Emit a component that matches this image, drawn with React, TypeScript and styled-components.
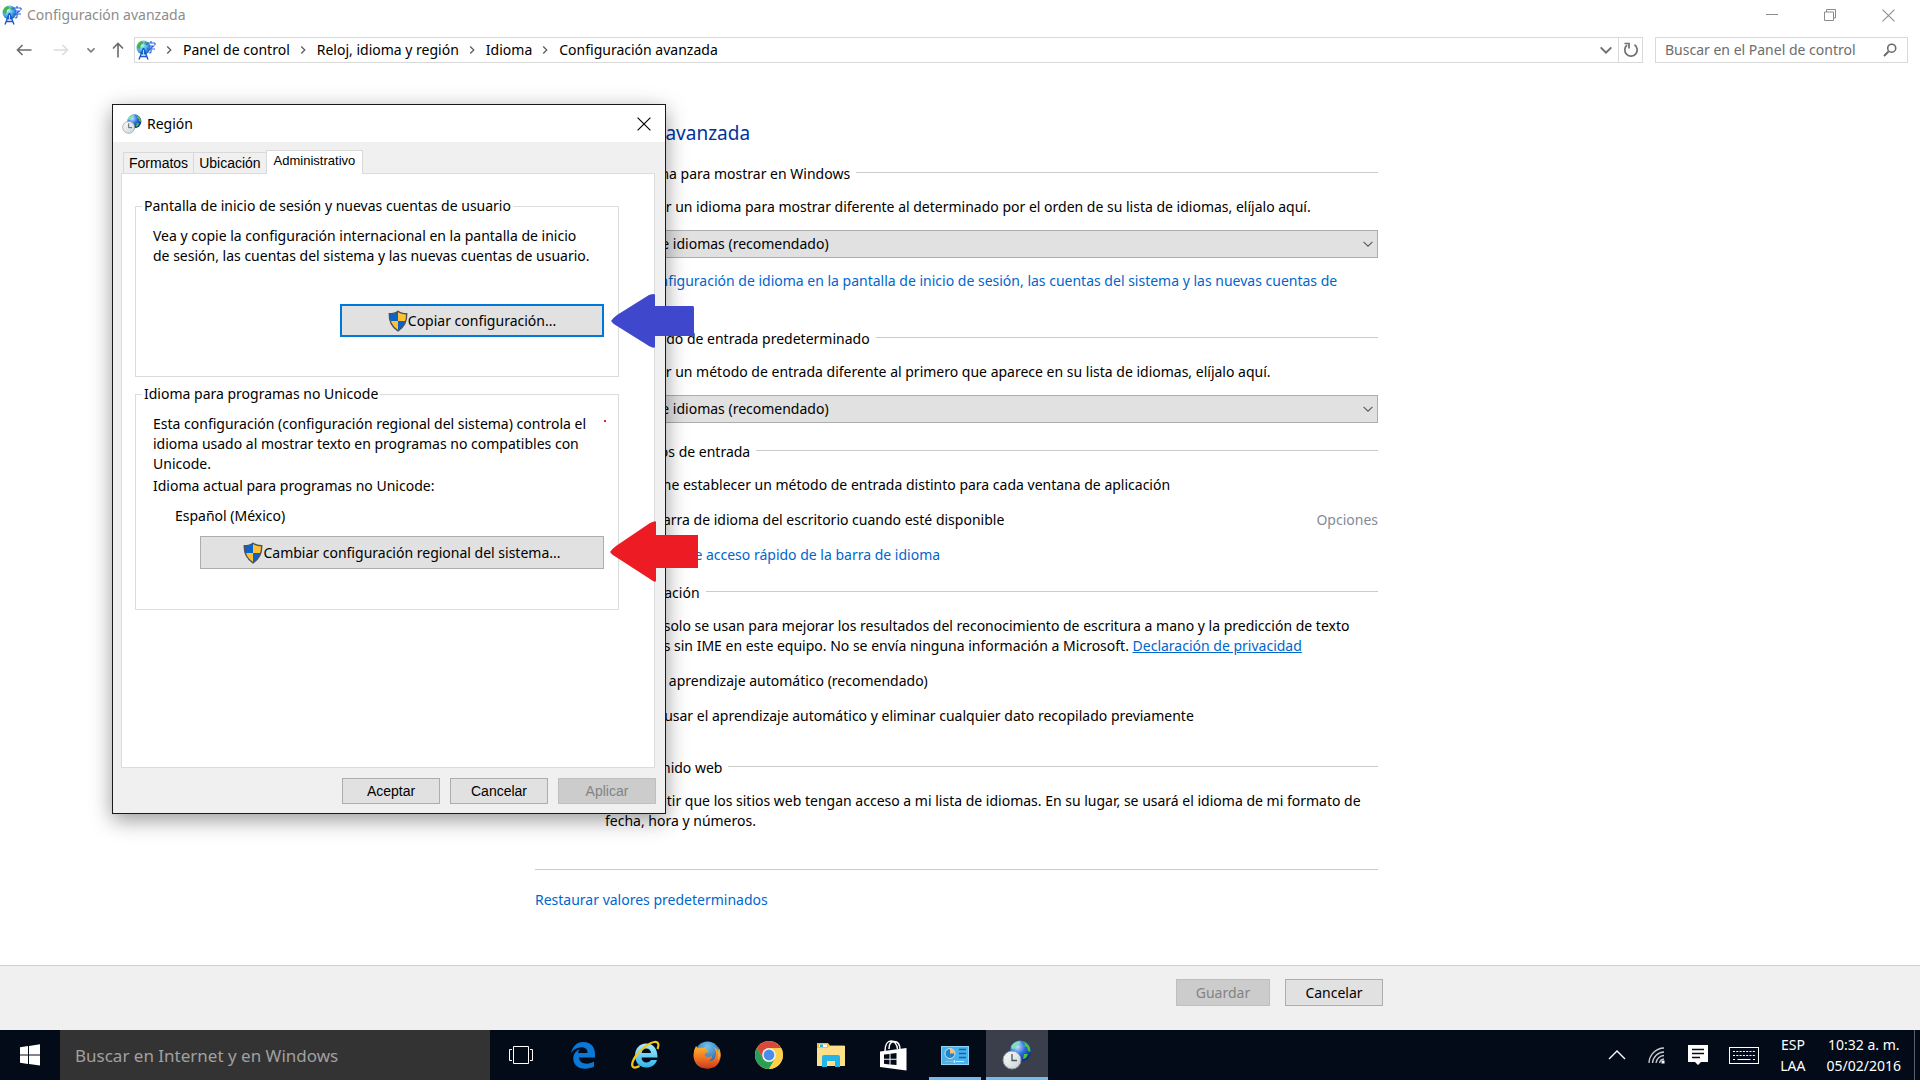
import React from "react";
import styled, { createGlobalStyle } from "styled-components";

const ui = '"Noto Sans", "Open Sans", sans-serif';
const classic = '"Liberation Sans", Arial, sans-serif';

const GlobalStyle = createGlobalStyle`
  *, *::before, *::after { box-sizing: border-box; }
  body { margin: 0; background: #fff; color: #000; font: 14px/20px ${ui}; }
  button, input, select { font: inherit; color: inherit; margin: 0; }
  h1, h2, p { margin: 0; font-weight: 400; }
  svg { display: block; flex: none; }
`;

/* ---------- shell ---------- */

const Desktop = styled.div`
  position: relative;
  display: flex;
  flex-direction: column;
  min-height: 100vh;
`;

const TitleBar = styled.header`
  display: flex;
  align-items: center;
  height: 30px;
  padding: 0 23px 0 2px;
  gap: 5px;
  color: #8c8c8c;
`;

const PlainButton = styled.button`
  display: grid;
  place-items: center;
  padding: 0;
  border: 0;
  background: none;
`;

const WindowControls = styled.div`
  display: flex;
  gap: 40px;
  margin-left: auto;

  ${PlainButton} { width: 18px; }
`;

const NavRow = styled.nav`
  display: flex;
  align-items: center;
  height: 40px;
  padding: 0 12px 0 6px;
`;

const History = styled.div`
  display: grid;
  grid-template-columns: 36px 38px 22px 32px;
`;

const AddressBar = styled.div`
  display: flex;
  flex: 1;
  height: 26px;
  margin-right: 12px;
  border: 1px solid #d9d9d9;
`;

const Crumbs = styled.ol`
  display: flex;
  align-items: center;
  flex: 1;
  margin: 0;
  padding: 0 0 0 1px;
  list-style: none;

  li { display: flex; align-items: center; }
  a { color: #000; text-decoration: none; }
  li svg { margin: 0 10px 0 9px; }
`;

const AddressButton = styled(PlainButton)<{ $divided?: boolean }>`
  width: 24px;
  border-left: ${(p) => (p.$divided ? "1px solid #d9d9d9" : "0")};
`;

const SearchBox = styled.label`
  display: flex;
  align-items: center;
  width: 253px;
  height: 26px;
  padding: 0 10px 0 9px;
  border: 1px solid #d9d9d9;

  input {
    flex: 1;
    min-width: 0;
    padding: 0;
    border: 0;
    outline: 0;
    background: none;
  }
  input::placeholder { color: #6d6d6d; opacity: 1; }
`;

/* ---------- settings page ---------- */

const Page = styled.main`
  flex: 1;
  width: 100%;
  max-width: 1378px;
  padding: 49px 0 0 535px;
`;

const Heading = styled.h1`
  font-size: 19px;
  line-height: 28px;
  margin-bottom: 17px;
  color: #003399;
`;

const Section = styled.section<{ $top?: number }>`
  margin-top: ${(p) => p.$top ?? 0}px;
`;

const Legend = styled.h2`
  display: flex;
  font-size: 14px;
  line-height: 20px;
  gap: 6px;
  margin-bottom: 13px;

  &::after {
    content: "";
    flex: 1;
    height: 1px;
    margin-top: 8px;
    background: #cbcbcb;
  }
`;

const Stack = styled.div<{ $gap: number }>`
  display: grid;
  gap: ${(p) => p.$gap}px;
  padding-left: 50px;
`;

const Link = styled.a<{ $underlined?: boolean }>`
  color: #0066cc;
  text-decoration: ${(p) => (p.$underlined ? "underline" : "none")};
`;

const MutedLink = styled.button`
  padding: 0;
  border: 0;
  background: none;
  color: #838b99;
  margin-left: auto;
`;

const SelectWrap = styled.div`
  display: grid;
  align-items: center;

  > * { grid-area: 1 / 1; }
  svg { justify-self: end; margin-right: 5px; pointer-events: none; }
`;

const Select = styled.select`
  appearance: none;
  width: 100%;
  height: 28px;
  padding: 0 24px 0 2px;
  border: 1px solid #adadad;
  border-radius: 0;
  background: #e1e1e1;
`;

const Choice = styled.label`
  display: flex;
  align-items: flex-start;
  gap: 7px;

  input { flex: none; width: 13px; height: 13px; margin-top: 3px; }
`;

const Line = styled.div`
  display: flex;
`;

const Restore = styled.div`
  margin-top: 38px;
  padding-top: 20px;
  border-top: 1px solid #cbcbcb;
`;

const Footer = styled.footer`
  height: 65px;
  border-top: 1px solid #cfcfcf;
  background: #f0f0f0;
`;

const FooterButtons = styled.div`
  display: flex;
  justify-content: flex-end;
  gap: 15px;
  width: 100%;
  max-width: 1383px;
  padding-top: 13px;
`;

const PushButton = styled.button<{ $width: number; $height: number; $focused?: boolean; $classic?: boolean }>`
  display: flex;
  align-items: center;
  justify-content: center;
  width: ${(p) => p.$width}px;
  height: ${(p) => p.$height}px;
  padding: 0;
  border: ${(p) => (p.$focused ? "2px solid #0078d7" : "1px solid #adadad")};
  background: #e1e1e1;
  font-family: ${(p) => (p.$classic ? classic : ui)};

  &:disabled { border-color: #bfbfbf; background: #ccc; color: #838383; }
`;

/* ---------- dialog ---------- */

const Dialog = styled.div`
  position: absolute;
  left: 112px;
  top: 104px;
  width: 554px;
  border: 1px solid #1a1a1a;
  background: #f0f0f0;
  box-shadow: 0 6px 20px rgba(0, 0, 0, 0.4);
`;

const DialogTitle = styled.header`
  display: flex;
  align-items: center;
  gap: 5px;
  height: 37px;
  padding: 0 14px 0 9px;
  background: #fff;

  button { margin-left: auto; }
`;

const DialogBody = styled.div`
  padding: 8px 10px 9px 8px;
`;

const Tabs = styled.div`
  display: flex;
  align-items: flex-end;
  padding-left: 3px;
`;

const Tab = styled.button<{ $active?: boolean }>`
  height: ${(p) => (p.$active ? 24 : 21)}px;
  margin: 0 0 ${(p) => (p.$active ? -1 : 0)}px -1px;
  padding: ${(p) => (p.$active ? "0 7px 3px" : "0 5px")};
  border: 1px solid #d9d9d9;
  border-bottom: 0;
  background: ${(p) => (p.$active ? "#fff" : "#f0f0f0")};
  position: relative;
  font-family: ${classic};
  font-size: ${(p) => (p.$active ? 13 : 14)}px;
  line-height: 18px;
  white-space: nowrap;
`;

const TabPanel = styled.div`
  height: 595px;
  padding: 22px 35px 0 13px;
  border: 1px solid #dcdcdc;
  background: #fff;
`;

const Group = styled.fieldset<{ $height: number }>`
  height: ${(p) => p.$height}px;
  margin: 0 0 7px;
  padding: 10px 14px 0 17px;
  border: 1px solid #dcdcdc;
  display: flow-root;

  legend { margin-left: -11px; padding: 0 2px; }
  p + p { margin-top: 2px; }
`;

const GroupAction = styled.div<{ $top: number }>`
  display: flex;
  justify-content: flex-end;
  margin-top: ${(p) => p.$top}px;
`;

const CurrentLocale = styled.p`
  padding: 8px 0 0 22px;
`;

const DialogButtons = styled.div`
  display: flex;
  justify-content: flex-end;
  gap: 10px;
  padding-top: 10px;
  margin-right: -1px;
`;

const Marker = styled.svg<{ $left: number; $top: number }>`
  position: absolute;
  left: ${(p) => p.$left}px;
  top: ${(p) => p.$top}px;
`;

/* ---------- taskbar ---------- */

const Taskbar = styled.div`
  display: flex;
  height: 50px;
  background: #040b18;
  color: #fff;
`;

const TaskButton = styled.button<{ $open?: boolean; $active?: boolean }>`
  display: grid;
  place-items: center;
  width: 62px;
  padding: 0;
  border: 0;
  background: ${(p) => (p.$active ? "#3b3f4b" : "none")};
  box-shadow: ${(p) => (p.$active ? "inset 0 -3px #76b9ed" : "none")};
  position: relative;

  &::after {
    content: ${(p) => (p.$open ? '""' : "none")};
    position: absolute;
    left: 5px;
    right: 5px;
    bottom: 0;
    height: 3px;
    background: #76b9ed;
  }
`;

const StartButton = styled(TaskButton)`
  width: 60px;
`;

const TaskSearch = styled.input`
  width: 430px;
  padding: 2px 15px 0;
  border: 0;
  outline: 0;
  background: #333;

  &&::placeholder { color: #a0a0a0; opacity: 1; }
  && { font-size: 17px; }
`;

const Tray = styled.div`
  display: flex;
  align-items: center;
  gap: 21px;
  margin-left: auto;
  padding-right: 5px;
`;

const TrayText = styled.div`
  line-height: 21px;
  text-align: center;
  white-space: nowrap;
`;

const ShowDesktop = styled.div`
  align-self: stretch;
  width: 1px;
  margin-left: -8px;
  background: #5b606b;
`;

/* ---------- drawings ---------- */

const LanguageIcon = () => (
  <svg width="20" height="20" viewBox="0 0 20 20">
    <defs>
      <radialGradient id="lg" cx=".35" cy=".3" r=".8">
        <stop offset="0" stopColor="#d4f6ff" />
        <stop offset=".5" stopColor="#4fb3ea" />
        <stop offset="1" stopColor="#1557b4" />
      </radialGradient>
    </defs>
    <circle cx="7.500" cy="7.500" r="7" fill="url(#lg)" />
    <path d="M1 6q1-4 5-5l2 2-3 2-1 4-3-1zM9 1.500l3 1.500-2 2-2-1z" fill="#42b649" />
    <path d="M11 3h8M15 1v2M11 3v2M19 3v2M12.500 6h5l-2.500 2v4q0 1-2 1M11 9h8" fill="none" stroke="#2a62e0" strokeWidth="1.200" />
    <path d="M7.500 8L3 19.500M7.500 8L12 19.500M5.500 13.500h4M4.500 16.500h6" fill="none" stroke="#1c55d0" strokeWidth="1.400" />
    <path d="M7.500 10v6" stroke="#9bdcff" strokeWidth="1" />
  </svg>
);

const RegionIcon = ({ size }: { size: number }) => (
  <svg width={size} height={size} viewBox="0 0 30 30">
    <defs>
      <radialGradient id="rg" cx=".35" cy=".3" r=".8">
        <stop offset="0" stopColor="#c4e4ff" />
        <stop offset=".45" stopColor="#2f6fe0" />
        <stop offset="1" stopColor="#081d78" />
      </radialGradient>
      <linearGradient id="rc" x2="1" y2="1">
        <stop offset="0" stopColor="#ffffff" />
        <stop offset="1" stopColor="#c8d2d8" />
      </linearGradient>
    </defs>
    <circle cx="18.500" cy="11" r="10.500" fill="url(#rg)" />
    <path d="M21 1.500Q26 3 28 7.500L28.500 12L26 11L25 7L22 6L23 4zM22 14l4 0-2 4-3 1z" fill="#4cc53e" />
    <path d="M9 6q3-4 8-5l2 2-4 2-1 3-4 1z" fill="#7fe0b8" />
    <circle cx="10" cy="20" r="9" fill="url(#rc)" stroke="#8d989e" strokeWidth="1" />
    <circle cx="10" cy="20" r="7.200" fill="none" stroke="#b9c5cb" strokeWidth=".8" strokeDasharray="1 2.770" />
    <path d="M10 14v6.500h5" fill="none" stroke="#4a555b" strokeWidth="1.300" />
  </svg>
);

const Shield = () => (
  <svg width="20" height="22" viewBox="0 0 20 22">
    <clipPath id="sh">
      <path d="M10 1.500Q13 4 18.500 4Q19 15 10 20.500Q1 15 1.500 4Q7 4 10 1.500z" />
    </clipPath>
    <g clipPath="url(#sh)">
      <rect width="10" height="11" fill="#0a63c9" />
      <rect x="10" width="10" height="11" fill="#ffc233" />
      <rect y="11" width="10" height="11" fill="#ffc233" />
      <rect x="10" y="11" width="10" height="11" fill="#0a63c9" />
    </g>
    <path d="M10 1.200Q13 3.700 18.700 3.700Q19.200 15 10 20.800Q.8 15 1.300 3.700Q7 3.700 10 1.200z" fill="none" stroke="#4d5358" strokeWidth="1.400" />
  </svg>
);

const Chevron = ({ dir, size = 8, color = "#5a5a5a", weight = 1.4 }: { dir: "right" | "down" | "up"; size?: number; color?: string; weight?: number }) => {
  const d = { right: "M2 0L6 4L2 8", down: "M0 2L4 6L8 2", up: "M0 6L4 2L8 6" }[dir];
  return (
    <svg width={size} height={size} viewBox="-.5 -.5 9 9">
      <path d={d} fill="none" stroke={color} strokeWidth={weight} />
    </svg>
  );
};

const Arrow = ({ dir, color }: { dir: "left" | "right" | "up"; color: string }) => {
  const turn = { left: 0, right: 180, up: 90 }[dir];
  return (
    <svg width="16" height="16" viewBox="0 0 16 16">
      <path d="M15.500 8H1M6.500 3L1.500 8L6.500 13" fill="none" stroke={color} strokeWidth="1.600" transform={`rotate(${turn} 8 8)`} />
    </svg>
  );
};

const Cross = ({ size, color }: { size: number; color: string }) => (
  <svg width={size} height={size} viewBox="0 0 12 12">
    <path d="M.5.500l11 11M11.500.500l-11 11" stroke={color} strokeWidth="1" />
  </svg>
);

const EdgeIcon = () => (
  <svg width="26" height="28" viewBox="0 0 26 28">
    <path d="M1 12C3 4 8 1 13.500 1C21 1 25 6.500 25 13V16.500H9C9.300 21 13 22.700 16.500 22.700C19.500 22.700 21.800 21.800 24 20.500V25.600C21.500 27 18.500 27.700 15 27.700C7.500 27.700 3.300 23.500 3.300 17.500C3.300 13 6 9.500 10 8C8.700 9.300 8.300 10.600 8.200 12H17.500C17.500 8.500 15.500 6.300 11.500 6.300C7.500 6.300 3.500 8.500 1 12z" fill="#0a78d6" />
  </svg>
);

const ExplorerEIcon = () => (
  <svg width="30" height="30" viewBox="0 0 30 30">
    <defs>
      <linearGradient id="ie" x2="0" y2="1">
        <stop offset="0" stopColor="#a8ecff" />
        <stop offset="1" stopColor="#31b4ea" />
      </linearGradient>
    </defs>
    <path d="M16 3.500C23 3.500 27.500 8 27.500 17.500H11.500C11.800 21 13.500 22.500 16.500 22.500C18.700 22.500 20 21.500 21 20H27C25.500 25 21.500 27.500 16 27.500C9.500 27.500 5 22.500 5 15.500C5 8.500 9.500 3.500 16 3.500zM11.700 13H21C20.700 10 19 8.500 16.400 8.500C13.700 8.500 12.100 10.200 11.700 13z" fill="url(#ie)" />
    <path d="M27.500 9C29.500 4 28 1 24 2C17 3.500 6 13 2.800 21.500C1 26.500 3 29.500 9.500 26" fill="none" stroke="#f6c51c" strokeWidth="2.200" />
  </svg>
);

const FirefoxIcon = () => (
  <svg width="28" height="28" viewBox="0 0 28 28">
    <defs>
      <linearGradient id="ff" x2="0" y2="1">
        <stop offset="0" stopColor="#ffb52b" />
        <stop offset=".55" stopColor="#ef7222" />
        <stop offset="1" stopColor="#c93a1c" />
      </linearGradient>
      <radialGradient id="fb" cx=".5" cy=".2" r=".9">
        <stop offset="0" stopColor="#6fc3ee" />
        <stop offset="1" stopColor="#173f86" />
      </radialGradient>
    </defs>
    <circle cx="14.500" cy="13" r="12.500" fill="url(#fb)" />
    <path d="M3 5L5 7.500Q7.500 6 10.500 7L13 5.500L13 8.500Q16 9 15.500 10.500L12 12.500Q11 15 14 16Q17 16.500 18.500 14.500Q20 17.500 16 20Q21 20.500 22.500 15.500Q24 10.500 21 6Q25 8 25.500 12Q26.500 9 25 5.500Q28.500 10 27.700 15.500Q26 27.500 14 27.700Q1.500 27 .5 15Q.3 9 3 5z" fill="url(#ff)" />
    <path d="M24 6Q28.500 13 25 19.500Q27 12 24 6z" fill="#ffe066" />
  </svg>
);

const ChromeIcon = () => (
  <svg width="28" height="28" viewBox="0 0 28 28">
    <circle cx="14" cy="14" r="14" fill="#fcd04b" />
    <path d="M1.900 7A14 14 0 0 1 26.100 7H14A7 7 0 0 0 7.900 10.500L7.900 17.500z" fill="#d9483b" />
    <path d="M1.900 7A14 14 0 0 0 14 28L20.100 17.500A7 7 0 0 1 7.900 17.500z" fill="#269f5a" />
    <path d="M26.100 7H14A7 7 0 0 1 20.100 17.500L14 28A14 14 0 0 0 26.100 7z" fill="#fcd04b" />
    <circle cx="14" cy="14" r="6.800" fill="#f4f4f4" />
    <circle cx="14" cy="14" r="5.400" fill="#4a8bf0" />
  </svg>
);

const FolderIcon = () => (
  <svg width="28" height="24" viewBox="0 0 28 24">
    <path d="M0 0h11l2 2.500h14.500V23H0z" fill="#f0bf3a" />
    <rect x="2" y="1.500" width="8" height="2.500" fill="#fff" />
    <rect x="3" y="1.500" width="3" height="2.500" fill="#2fa8e8" />
    <path d="M0 5h10l3-2h15v20H0z" fill="#fde08a" />
    <path d="M5 24V14q0-2 2-2h14q2 0 2 2v10h-5v-6h-8v6z" fill="#23b5ea" />
  </svg>
);

const StoreIcon = () => (
  <svg width="27" height="31" viewBox="0 0 27 31">
    <path d="M5 11C5 4 8 1 11 1C14 1 17 4 17.500 9M9 9C9 3 12 1.500 14 1.500C18 1.500 20 5 20 10" fill="none" stroke="#fff" strokeWidth="1.500" />
    <path d="M0 11.500L26.500 8V30.500L0 27z" fill="#fff" />
    <path d="M4 14.500l5.500-.6v4.800H4zM10.500 13.800l6-.8v5.700h-6zM4 19.700h5.500v4.700L4 23.800zM10.500 19.700h6v5.400l-6-.6z" fill="#040b18" />
  </svg>
);

const PanelIcon = () => (
  <svg width="28" height="19" viewBox="0 0 28 19">
    <rect x=".5" y=".5" width="27" height="18" fill="#49b2ec" stroke="#8ad4fa" />
    <circle cx="9" cy="7.500" r="5" fill="#2783c9" stroke="#e9f7ff" strokeWidth=".8" />
    <path d="M9 7.500V2.500a5 5 0 0 1 5 5z" fill="#f5c07a" />
    <path d="M18 3.500h7M18 7.500h7M18 11.500h7" stroke="#1465a5" strokeWidth="1.300" />
    <path d="M4 15.500h9" stroke="#f5a836" strokeWidth="1.200" />
    <path d="M15 15.500h8M13.500 14v3" stroke="#c8ebff" strokeWidth="1.200" />
  </svg>
);

/* ---------- app ---------- */

const crumbs = ["Panel de control", "Reloj, idioma y región", "Idioma", "Configuración avanzada"];

const taskItems = [
  { name: "Microsoft Edge", icon: <EdgeIcon /> },
  { name: "Internet Explorer", icon: <ExplorerEIcon /> },
  { name: "Firefox", icon: <FirefoxIcon /> },
  { name: "Chrome", icon: <ChromeIcon /> },
  { name: "Explorador de archivos", icon: <FolderIcon /> },
  { name: "Tienda", icon: <StoreIcon /> },
  { name: "Panel de control", icon: <PanelIcon />, open: true },
  { name: "Región", icon: <RegionIcon size={30} />, active: true },
];

const LanguageSelect = ({ label }: { label: string }) => (
  <SelectWrap>
    <Select aria-label={label} defaultValue="list">
      <option value="list">Usar lista de idiomas (recomendado)</option>
    </Select>
    <Chevron dir="down" size={10} weight={1} />
  </SelectWrap>
);

const RegionDialog = () => (
  <Dialog role="dialog" aria-label="Región">
    <DialogTitle>
      <RegionIcon size={20} />
      Región
      <PlainButton aria-label="Cerrar"><Cross size={14} color="#000" /></PlainButton>
    </DialogTitle>
    <DialogBody>
      <Tabs role="tablist">
        <Tab role="tab">Formatos</Tab>
        <Tab role="tab">Ubicación</Tab>
        <Tab role="tab" aria-selected $active>Administrativo</Tab>
      </Tabs>
      <TabPanel role="tabpanel">
        <Group $height={181}>
          <legend>Pantalla de inicio de sesión y nuevas cuentas de usuario</legend>
          <p>
            Vea y copie la configuración internacional en la pantalla de inicio<br />
            de sesión, las cuentas del sistema y las nuevas cuentas de usuario.
          </p>
          <GroupAction $top={38}>
            <PushButton $width={264} $height={33} $focused><Shield />Copiar configuración...</PushButton>
          </GroupAction>
        </Group>
        <Group $height={226}>
          <legend>Idioma para programas no Unicode</legend>
          <p>
            Esta configuración (configuración regional del sistema) controla el<br />
            idioma usado al mostrar texto en programas no compatibles con<br />
            Unicode.
          </p>
          <p>Idioma actual para programas no Unicode:</p>
          <CurrentLocale>Español (México)</CurrentLocale>
          <GroupAction $top={10}>
            <PushButton $width={404} $height={33}><Shield />Cambiar configuración regional del sistema...</PushButton>
          </GroupAction>
        </Group>
      </TabPanel>
      <DialogButtons>
        <PushButton $classic $width={98} $height={26}>Aceptar</PushButton>
        <PushButton $classic $width={98} $height={26}>Cancelar</PushButton>
        <PushButton $classic $width={98} $height={26} disabled>Aplicar</PushButton>
      </DialogButtons>
    </DialogBody>
  </Dialog>
);

export default function App() {
  return (
    <Desktop>
      <GlobalStyle />
      <TitleBar>
        <LanguageIcon />
        Configuración avanzada
        <WindowControls>
          <PlainButton aria-label="Minimizar">
            <svg width="18" height="12"><path d="M3 5.500h12" stroke="#8c8c8c" /></svg>
          </PlainButton>
          <PlainButton aria-label="Restaurar">
            <svg width="18" height="12"><path d="M3.500 3h9v8.500h-9zM5.500 3V.5h9v8.500h-2" fill="none" stroke="#8c8c8c" /></svg>
          </PlainButton>
          <PlainButton aria-label="Cerrar"><Cross size={13} color="#8c8c8c" /></PlainButton>
        </WindowControls>
      </TitleBar>
      <NavRow>
        <History>
          <PlainButton aria-label="Atrás"><Arrow dir="left" color="#6b6b6b" /></PlainButton>
          <PlainButton aria-label="Adelante"><Arrow dir="right" color="#dcdcdc" /></PlainButton>
          <PlainButton aria-label="Ubicaciones recientes"><Chevron dir="down" color="#7a7a7a" weight={1.8} /></PlainButton>
          <PlainButton aria-label="Subir"><Arrow dir="up" color="#6b6b6b" /></PlainButton>
        </History>
        <AddressBar>
          <Crumbs>
            <LanguageIcon />
            {crumbs.map((name) => (
              <li key={name}>
                <Chevron dir="right" />
                <a href="#">{name}</a>
              </li>
            ))}
          </Crumbs>
          <AddressButton aria-label="Ubicaciones anteriores"><Chevron dir="down" size={12} weight={1.5} color="#707070" /></AddressButton>
          <AddressButton $divided aria-label="Actualizar">
            <svg width="16" height="16" viewBox="0 0 16 16">
              <path d="M11.500 2.800A6.200 6.200 0 1 1 4 3.200M1.500 1.500H6V6.500" fill="none" stroke="#707070" strokeWidth="1.700" />
            </svg>
          </AddressButton>
        </AddressBar>
        <SearchBox>
          <input aria-label="Buscar" placeholder="Buscar en el Panel de control" />
          <svg width="14" height="14" viewBox="0 0 14 14">
            <path d="M5.500 8.500L1 13" stroke="#6b6b6b" strokeWidth="2" />
            <circle cx="8.700" cy="5.200" r="4" fill="none" stroke="#6b6b6b" strokeWidth="1.600" />
          </svg>
        </SearchBox>
      </NavRow>

      <Page>
        <Heading>Configuración avanzada</Heading>
        <Section>
          <Legend>Reemplazar el idioma para mostrar en Windows</Legend>
          <Stack $gap={13}>
            <p>Si desea usar un idioma para mostrar diferente al determinado por el orden de su lista de idiomas, elíjalo aquí.</p>
            <LanguageSelect label="Idioma para mostrar" />
            <Link href="#">Cambiar configuración de idioma en la pantalla de inicio de sesión, las cuentas del sistema y las nuevas cuentas de<br />usuario</Link>
          </Stack>
        </Section>
        <Section $top={18}>
          <Legend>Reemplazar el método de entrada predeterminado</Legend>
          <Stack $gap={13}>
            <p>Si desea usar un método de entrada diferente al primero que aparece en su lista de idiomas, elíjalo aquí.</p>
            <LanguageSelect label="Método de entrada" />
          </Stack>
        </Section>
        <Section $top={19}>
          <Legend>Cambiar los métodos de entrada</Legend>
          <Stack $gap={15}>
            <Choice><input type="checkbox" />Permitirme establecer un método de entrada distinto para cada ventana de aplicación</Choice>
            <Line>
              <Choice><input type="checkbox" />Usar la barra de idioma del escritorio cuando esté disponible</Choice>
              <MutedLink disabled>Opciones</MutedLink>
            </Line>
            <Link href="#">Cambiar teclas de acceso rápido de la barra de idioma</Link>
          </Stack>
        </Section>
        <Section $top={18}>
          <Legend>Datos de documentación</Legend>
          <Stack $gap={15}>
            <p>
              Estos datos solo se usan para mejorar los resultados del reconocimiento de escritura a mano y la predicción de texto<br />
              para idiomas sin IME en este equipo. No se envía ninguna información a Microsoft. <Link href="#" $underlined>Declaración de privacidad</Link>
            </p>
            <Choice><input type="radio" name="learning" defaultChecked />Activar el aprendizaje automático (recomendado)</Choice>
            <Choice><input type="radio" name="learning" />Dejar de usar el aprendizaje automático y eliminar cualquier dato recopilado previamente</Choice>
          </Stack>
        </Section>
        <Section $top={32}>
          <Legend>Idiomas para contenido web</Legend>
          <Stack $gap={13}>
            <Choice>
              <input type="checkbox" />
              <span>No permitir que los sitios web tengan acceso a mi lista de idiomas. En su lugar, se usará el idioma de mi formato de<br />fecha, hora y números.</span>
            </Choice>
          </Stack>
        </Section>
        <Restore><Link href="#">Restaurar valores predeterminados</Link></Restore>
      </Page>

      <Footer>
        <FooterButtons>
          <PushButton $width={94} $height={27} disabled>Guardar</PushButton>
          <PushButton $width={98} $height={27}>Cancelar</PushButton>
        </FooterButtons>
      </Footer>

      <Taskbar>
        <StartButton aria-label="Inicio">
          <svg width="20" height="22" viewBox="0 0 20 22">
            <path d="M0 3.200L8 2V10.400H0zM9 1.900L20 .3V10.400H9zM0 11.500H8V19.900L0 18.700zM9 11.500H20V21.600L9 20z" fill="#fff" />
          </svg>
        </StartButton>
        <TaskSearch aria-label="Buscar en Windows" placeholder="Buscar en Internet y en Windows" />
        <TaskButton aria-label="Vista de tareas">
          <svg width="24" height="20" viewBox="0 0 24 20">
            <path d="M4.500 1.500h15v17h-15zM3 4.500H.5v11H3M21 4.500h2.500v11H21" fill="none" stroke="#fff" strokeWidth="1" />
          </svg>
        </TaskButton>
        {taskItems.map((t) => (
          <TaskButton key={t.name} aria-label={t.name} $open={t.open} $active={t.active}>{t.icon}</TaskButton>
        ))}
        <Tray>
          <Chevron dir="up" size={18} color="#fff" weight={0.7} />
          <svg width="20" height="18" viewBox="0 0 20 18">
            <g fill="none" stroke="#c8ccd2" strokeWidth="1.300">
              <path d="M2 17A15.500 15.500 0 0 1 17 2M5.500 17A12 12 0 0 1 17 6M9 17A8.500 8.500 0 0 1 17 9.500M12.500 17A5 5 0 0 1 17 13" />
            </g>
            <rect x="14.500" y="14.500" width="3" height="3" fill="#fff" />
          </svg>
          <svg width="20" height="20" viewBox="0 0 20 20">
            <path d="M0 0h20v17h-7l-3 3-3-3H0z" fill="#fff" />
            <path d="M4 4.500h12M4 8.500h12M4 12.500h8" stroke="#040b18" strokeWidth="1.300" />
          </svg>
          <svg width="30" height="17" viewBox="0 0 30 17">
            <rect x=".5" y=".5" width="29" height="16" fill="none" stroke="#fff" />
            <path d="M4 4.500h22M4 8.500h22" stroke="#fff" strokeDasharray="2 1.300" />
            <path d="M4 12.500h2M8.500 12.500h13M24 12.500h2" stroke="#fff" />
          </svg>
          <TrayText>ESP<br />LAA</TrayText>
          <TrayText>10:32 a. m.<br />05/02/2016</TrayText>
          <ShowDesktop />
        </Tray>
      </Taskbar>

      <RegionDialog />
      <Marker $left={611} $top={294} width="84" height="54" viewBox="0 0 84 54">
        <path d="M0 27Q2 24 6 21L38 1Q44-1 44 1V12H82Q83 12 83 14V42H44V53Q43 55 38 52L6 32Q2 30 0 27z" fill="#3f48cc" />
      </Marker>
      <Marker $left={610} $top={521} width="88" height="61" viewBox="0 0 88 61">
        <path d="M0 31Q2 28 6 25L40 2Q46-1 46 1V14H88V47H46V60Q45 62 40 58L6 36Q2 34 0 31z" fill="#ed1c24" />
      </Marker>
      <Marker $left={604} $top={420} width="2" height="2" viewBox="0 0 2 2">
        <rect width="2" height="2" fill="#ed1c24" />
      </Marker>
    </Desktop>
  );
}
